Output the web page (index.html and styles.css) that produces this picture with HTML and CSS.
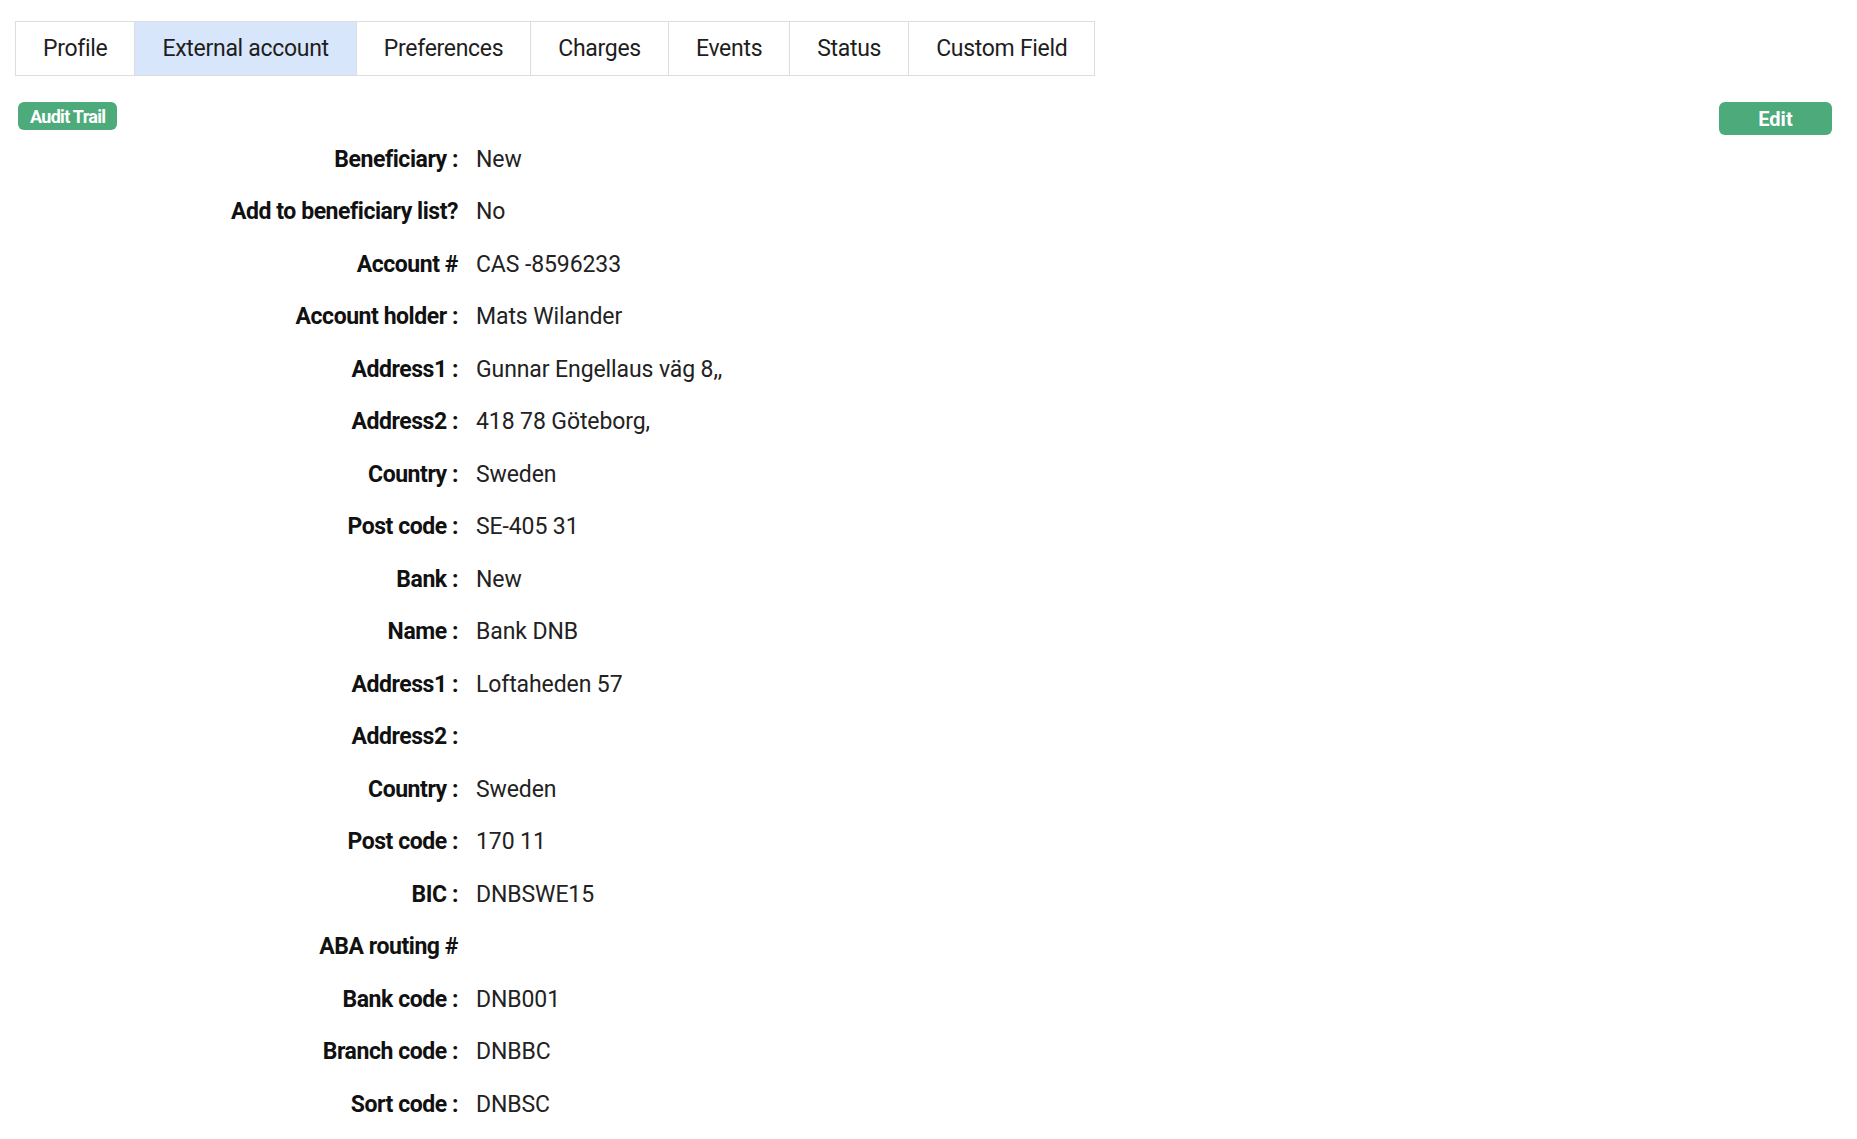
FILE: index.html
```html
<!DOCTYPE html>
<html lang="en">
<head>
<meta charset="utf-8">
<title>External account</title>
<link rel="stylesheet" href="styles.css">
</head>
<body>
<div class="page">
  <ul class="tabs">
    <li class="tab">Profile</li>
    <li class="tab active">External account</li>
    <li class="tab">Preferences</li>
    <li class="tab">Charges</li>
    <li class="tab">Events</li>
    <li class="tab">Status</li>
    <li class="tab">Custom Field</li>
  </ul>
  <div class="toolbar">
    <span class="badge">Audit Trail</span>
    <button class="btn-edit" type="button">Edit</button>
  </div>
  <dl class="details">
    <div class="row"><dt>Beneficiary :</dt><dd>New</dd></div>
    <div class="row"><dt>Add to beneficiary list?</dt><dd>No</dd></div>
    <div class="row"><dt>Account #</dt><dd>CAS -8596233</dd></div>
    <div class="row"><dt>Account holder :</dt><dd>Mats Wilander</dd></div>
    <div class="row"><dt>Address1 :</dt><dd>Gunnar Engellaus väg 8,,</dd></div>
    <div class="row"><dt>Address2 :</dt><dd>418 78 Göteborg,</dd></div>
    <div class="row"><dt>Country :</dt><dd>Sweden</dd></div>
    <div class="row"><dt>Post code :</dt><dd>SE-405 31</dd></div>
    <div class="row"><dt>Bank :</dt><dd>New</dd></div>
    <div class="row"><dt>Name :</dt><dd>Bank DNB</dd></div>
    <div class="row"><dt>Address1 :</dt><dd>Loftaheden 57</dd></div>
    <div class="row"><dt>Address2 :</dt><dd></dd></div>
    <div class="row"><dt>Country :</dt><dd>Sweden</dd></div>
    <div class="row"><dt>Post code :</dt><dd>170 11</dd></div>
    <div class="row"><dt>BIC :</dt><dd>DNBSWE15</dd></div>
    <div class="row"><dt>ABA routing #</dt><dd></dd></div>
    <div class="row"><dt>Bank code :</dt><dd>DNB001</dd></div>
    <div class="row"><dt>Branch code :</dt><dd>DNBBC</dd></div>
    <div class="row"><dt>Sort code :</dt><dd>DNBSC</dd></div>
  </dl>
</div>
</body>
</html>
```
FILE: styles.css
```css
html, body {
  margin: 0;
  padding: 0;
  background: #ffffff;
}
body {
  font-family: Roboto, "Liberation Sans", sans-serif;
  color: #1e1e1e;
}
.page {
  padding: 21px 25px 0 15px;
}
.tabs {
  list-style: none;
  margin: 0;
  padding: 0;
  display: flex;
  width: max-content;
  border: 1px solid #dddddd;
}
.tab {
  height: 53px;
  padding: 0 27px;
  display: flex;
  align-items: center;
  font-size: 23px;
  letter-spacing: -0.3px;
  color: #1e1e1e;
  border-left: 1px solid #dddddd;
}
.tab:first-child {
  border-left: none;
}
.tab.active {
  background: #d8e6fc;
}
.toolbar {
  display: flex;
  justify-content: space-between;
  align-items: flex-start;
  height: 31px;
  margin-top: 26px;
}
.badge {
  background: #4caa7b;
  color: #ffffff;
  font-weight: 700;
  font-size: 18px;
  letter-spacing: -0.7px;
  height: 28px;
  padding: 0 12px;
  border-radius: 6px;
  display: flex;
  align-items: center;
  margin-left: 3px;
}
.btn-edit {
  background: #4caa7b;
  color: #ffffff;
  font-family: Roboto, "Liberation Sans", sans-serif;
  font-weight: 700;
  font-size: 20px;
  width: 113px;
  height: 33px;
  border: none;
  border-radius: 6px;
  padding: 0;
}
.details {
  margin: 0;
  padding: 0;
}
.row {
  display: grid;
  grid-template-columns: 443px 1fr;
  column-gap: 18px;
  align-items: center;
  height: 52.5px;
}
.row dt {
  text-align: right;
  font-weight: 700;
  font-size: 23px;
  letter-spacing: -0.45px;
  color: #111111;
}
.row dd {
  margin: 0;
  font-size: 23px;
  letter-spacing: -0.1px;
  color: #222222;
}
```
